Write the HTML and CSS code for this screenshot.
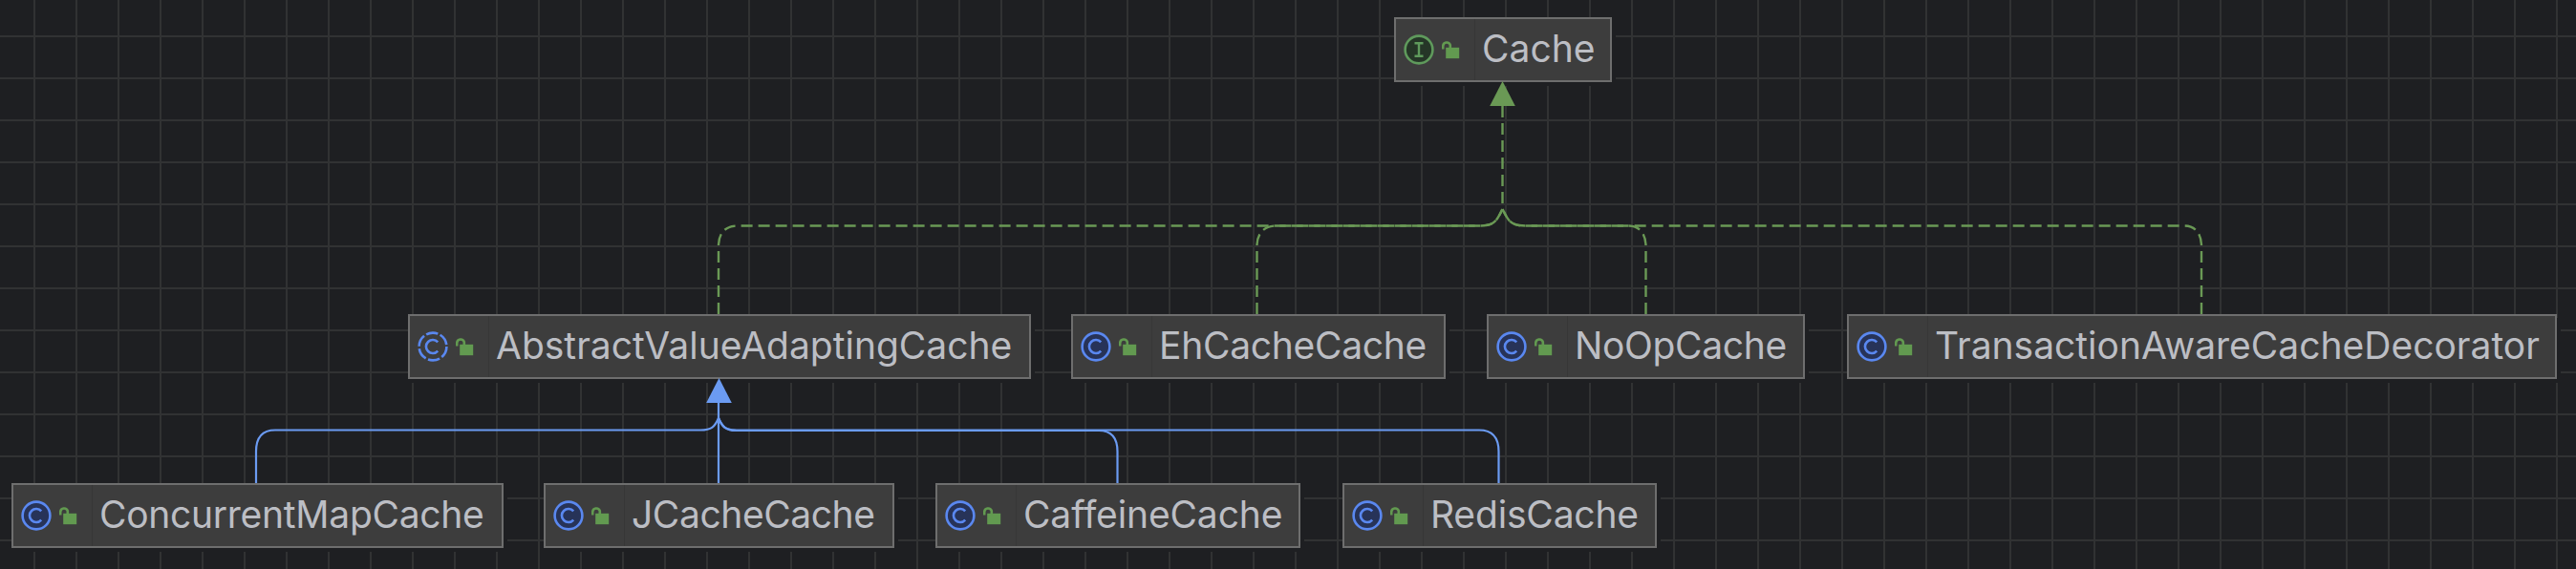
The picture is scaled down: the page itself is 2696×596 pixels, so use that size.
FILE: index.html
```html
<!DOCTYPE html>
<html lang="en">
<head>
<meta charset="utf-8">
<title>Cache hierarchy</title>
<link rel="stylesheet" href="styles.css">
</head>
<body>
<svg class="defs" width="0" height="0" aria-hidden="true">
  <symbol id="lock" viewBox="0 0 19 19">
    <path class="lock-shackle" d="M1.2 8.5V5.2a3.9 3.9 0 0 1 7.6-1V7"/>
    <rect class="lock-body" x="4.2" y="6.8" width="14" height="11.4"/>
  </symbol>
  <symbol id="class-icon" viewBox="0 0 32 32">
    <circle class="class-disc" cx="16" cy="16" r="14.4"/>
    <path class="class-c" d="M21.2 11.4a7 7 0 1 0 0 9.2"/>
  </symbol>
  <symbol id="abstract-icon" viewBox="0 0 32 32">
    <circle class="abstract-disc" cx="16" cy="16" r="14.4"/>
    <path class="class-c" d="M21.2 11.4a7 7 0 1 0 0 9.2"/>
  </symbol>
  <symbol id="interface-icon" viewBox="0 0 32 32">
    <circle class="interface-disc" cx="16" cy="16" r="14.4"/>
    <path class="interface-i" d="M11.5 9.2h9M16 9.2v13.6M11.5 22.8h9"/>
  </symbol>
</svg>
<main class="canvas">
  <div class="node n-cache">
    <div class="node-icons"><svg class="kind"><use href="#interface-icon"/></svg><svg class="lock"><use href="#lock"/></svg></div>
    <span class="node-name">Cache</span>
  </div>
  <div class="node n-abstract">
    <div class="node-icons"><svg class="kind"><use href="#abstract-icon"/></svg><svg class="lock"><use href="#lock"/></svg></div>
    <span class="node-name">AbstractValueAdaptingCache</span>
  </div>
  <div class="node n-ehcache">
    <div class="node-icons"><svg class="kind"><use href="#class-icon"/></svg><svg class="lock"><use href="#lock"/></svg></div>
    <span class="node-name">EhCacheCache</span>
  </div>
  <div class="node n-noop">
    <div class="node-icons"><svg class="kind"><use href="#class-icon"/></svg><svg class="lock"><use href="#lock"/></svg></div>
    <span class="node-name">NoOpCache</span>
  </div>
  <div class="node n-transaction">
    <div class="node-icons"><svg class="kind"><use href="#class-icon"/></svg><svg class="lock"><use href="#lock"/></svg></div>
    <span class="node-name">TransactionAwareCacheDecorator</span>
  </div>
  <div class="node n-concurrent">
    <div class="node-icons"><svg class="kind"><use href="#class-icon"/></svg><svg class="lock"><use href="#lock"/></svg></div>
    <span class="node-name">ConcurrentMapCache</span>
  </div>
  <div class="node n-jcache">
    <div class="node-icons"><svg class="kind"><use href="#class-icon"/></svg><svg class="lock"><use href="#lock"/></svg></div>
    <span class="node-name">JCacheCache</span>
  </div>
  <div class="node n-caffeine">
    <div class="node-icons"><svg class="kind"><use href="#class-icon"/></svg><svg class="lock"><use href="#lock"/></svg></div>
    <span class="node-name">CaffeineCache</span>
  </div>
  <div class="node n-redis">
    <div class="node-icons"><svg class="kind"><use href="#class-icon"/></svg><svg class="lock"><use href="#lock"/></svg></div>
    <span class="node-name">RedisCache</span>
  </div>
  <svg class="edges" viewBox="0 0 2696 596" aria-hidden="true">
    <g class="edge-green">
      <path d="M1572.5 111V216"/>
      <path d="M752 329V258C752 245 758 236.5 772 236.5H1548C1564 236.5 1566 232 1572.5 219"/>
      <path d="M1315.5 329V258C1315.5 245 1322 236.5 1336 236.5H1548C1564 236.5 1566 232 1572.5 219"/>
      <path d="M1722.5 329V258C1722.5 245 1716 236.5 1704 236.5H1597C1581 236.5 1579 232 1572.5 219"/>
      <path d="M2304 329V258C2304 245 2298 236.5 2286 236.5H1597C1581 236.5 1579 232 1572.5 219"/>
    </g>
    <polygon class="arrow-green" points="1572.5,85 1585.8,111 1559.2,111"/>
    <g class="edge-blue">
      <path d="M752 422V506"/>
      <path d="M268 506V473C268 459 274 450.5 288 450.5H733C745 450.5 748 447 752 438"/>
      <path d="M1169.5 506V473C1169.5 459 1163 451 1150 451H771C759 451 756 447 752 438"/>
      <path d="M1568.5 506V473C1568.5 459 1562 450.5 1548 450.5H771C759 450.5 756 447 752 438"/>
    </g>
    <polygon class="arrow-blue" points="752.5,396 765.8,422 739.2,422"/>
  </svg>
</main>
</body>
</html>
```
FILE: styles.css
```css
* { box-sizing: border-box; }

html, body {
  margin: 0;
  padding: 0;
  background: #1e1f22;
}

.defs { position: absolute; }

.canvas {
  position: relative;
  width: 2696px;
  height: 596px;
  overflow: hidden;
  background-color: #1e1f22;
  background-image:
    linear-gradient(to right, #313233 2px, transparent 2px),
    linear-gradient(to bottom, #313233 2px, transparent 2px);
  background-size: 44px 44px;
  background-position: 35px 37px;
}

.node {
  position: absolute;
  height: 68px;
  display: flex;
  align-items: stretch;
  background: #3d3d3d;
  border: 2px solid #6e6e6e;
  box-shadow: 4px 4px 0 #1e1f22;
  font-family: Inter, "Liberation Sans", sans-serif;
  font-size: 39px;
  color: #bcbec4;
}

.node-icons {
  flex: none;
  width: 83px;
  display: flex;
  align-items: center;
  gap: 8px;
  padding-left: 7.5px;
  border-right: 1px solid #373737;
}

.node-name {
  align-self: center;
  padding-left: 7px;
  padding-bottom: 3px;
  white-space: nowrap;
  line-height: 46px;
}

.kind { width: 32px; height: 32px; flex: none; }
.lock { width: 19px; height: 19px; flex: none; }

.lock-shackle { fill: none; stroke: #629a50; stroke-width: 2.6; }
.lock-body { fill: #629a50; }

.class-disc { fill: #273358; stroke: #5a88f0; stroke-width: 2.6; }
.abstract-disc { fill: none; stroke: #5a88f0; stroke-width: 2.6; stroke-dasharray: 12.5 2.58; }
.class-c { fill: none; stroke: #5a88f0; stroke-width: 2.6; }
.interface-disc { fill: #253627; stroke: #5f9a5c; stroke-width: 2.6; }
.interface-i { fill: none; stroke: #5f9a5c; stroke-width: 2.4; }

.n-cache { left: 1459px; top: 18px; width: 228px; }
.n-abstract { left: 427px; top: 329px; width: 652px; }
.n-ehcache { left: 1121px; top: 329px; width: 392px; letter-spacing: -0.28px; }
.n-noop { left: 1556px; top: 329px; width: 333px; letter-spacing: -0.35px; }
.n-transaction { left: 1933px; top: 329px; width: 743px; }
.n-concurrent { left: 12px; top: 506px; width: 515px; letter-spacing: -0.28px; }
.n-jcache { left: 569px; top: 506px; width: 367px; letter-spacing: -0.42px; }
.n-caffeine { left: 979px; top: 506px; width: 382px; letter-spacing: -0.13px; }
.n-redis { left: 1405px; top: 506px; width: 329px; letter-spacing: -0.17px; }

.edges {
  position: absolute;
  left: 0;
  top: 0;
  width: 2696px;
  height: 596px;
  pointer-events: none;
}

.edge-green path { fill: none; stroke: #6a9955; stroke-width: 2.4; stroke-dasharray: 12 6; }
.edge-blue path { fill: none; stroke: #6b9bf2; stroke-width: 2.2; }
.arrow-green { fill: #6a9955; }
.arrow-blue { fill: #6b9bf2; }
```
